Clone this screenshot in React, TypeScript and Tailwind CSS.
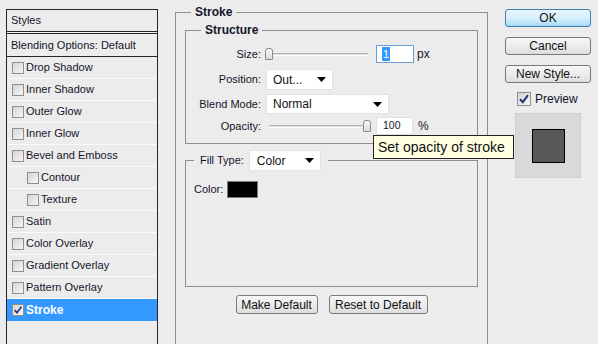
import React from "react";

const font = "font-['Liberation_Sans',Arial,sans-serif]";

function Check({ checked, size = 12 }: { checked?: boolean; size?: number }) {
  return (
    <span
      className="flex shrink-0 items-center justify-center border border-[#8f8f8f] bg-gradient-to-br from-[#d4d4d4] to-[#f7f7f7]"
      style={{ width: size, height: size }}
    >
      {checked && (
        <svg width={size - 2} height={size - 2} viewBox="0 0 12 12">
          <path d="M2 6.2 L4.8 9.2 L10 2.2" fill="none" stroke="#24337a" strokeWidth="2" />
        </svg>
      )}
    </span>
  );
}

function Arrow() {
  return (
    <svg width="9" height="5" viewBox="0 0 9 5">
      <path d="M0 0 H9 L4.5 5 Z" fill="#000" />
    </svg>
  );
}

function Select({ value, className }: { value: string; className: string }) {
  return (
    <div
      className={`flex items-center justify-between border border-[#e2e2e2] bg-white pr-[6px] pl-[6px] text-[12px] text-[#111] ${className}`}
    >
      <span>{value}</span>
      <Arrow />
    </div>
  );
}

function Slider({ thumb, className }: { thumb: "start" | "end"; className: string }) {
  return (
    <div className={`relative flex h-full items-center ${className}`}>
      <div className="h-[3px] w-full border-t border-[#b4b4b4] border-b border-b-white bg-[#dcdcdc]" />
      <div
        className={`absolute top-1/2 h-[12px] w-[8px] -translate-y-1/2 rounded-t-[3px] rounded-b-[1px] border border-[#8a8a8a] bg-gradient-to-b from-[#fafafa] to-[#dadada] ${
          thumb === "start" ? "left-0" : "right-0"
        }`}
      />
    </div>
  );
}

function Btn({ children, className }: { children: React.ReactNode; className: string }) {
  return (
    <div
      className={`flex items-center justify-center rounded-[3px] border border-[#7a7a7a] bg-gradient-to-b from-[#f7f7f7] via-[#ececec] to-[#dddddd] text-[12px] text-[#111] ${className}`}
    >
      {children}
    </div>
  );
}

const items: { label: string; indent?: boolean; checked?: boolean }[] = [
  { label: "Drop Shadow" },
  { label: "Inner Shadow" },
  { label: "Outer Glow" },
  { label: "Inner Glow" },
  { label: "Bevel and Emboss" },
  { label: "Contour", indent: true },
  { label: "Texture", indent: true },
  { label: "Satin" },
  { label: "Color Overlay" },
  { label: "Gradient Overlay" },
  { label: "Pattern Overlay" },
  { label: "Stroke", checked: true },
];

export default function App() {
  return (
    <div className={`${font} relative flex h-[344px] w-[598px] items-start overflow-hidden bg-[#ececec] text-[11px] text-[#15152a]`}>
      {/* styles list */}
      <div className="mt-[9px] ml-[6px] h-[400px] w-[152px] shrink-0 border border-[#262626]">
        <div className="flex h-[22px] items-center border-b border-[#262626] pl-[4px]">Styles</div>
        <div className="h-[1px] bg-[#f4f4f4]" />
        <div className="flex h-[24px] items-center border-y border-[#262626] pl-[4px]">
          Blending Options: Default
        </div>
        {items.map((it) => (
          <div
            key={it.label}
            className={`flex h-[22px] items-center gap-[2px] border-b ${
              it.checked ? "border-[#3399ff] bg-[#3399ff] text-[12px] font-bold text-white" : "border-[#fbfbfb]"
            } ${it.indent ? "pl-[20px]" : "pl-[5px]"}`}
          >
            <Check checked={it.checked} />
            <span>{it.label}</span>
          </div>
        ))}
      </div>

      {/* stroke panel */}
      <div className="mt-[5px] ml-[17px] w-[313px] shrink-0">
        <fieldset className="h-[400px] border border-[#8e8e8e]">
          <legend className="ml-[15px] px-[4px] text-[12px] leading-[14px] font-bold">Stroke</legend>
          <div className="px-[9px] pt-[4px]">
            <fieldset className="border border-[#8e8e8e]">
              <legend className="ml-[15px] px-[4px] text-[12px] leading-[14px] font-bold">Structure</legend>
              <div className="pt-[7px] pb-[8px]">
                <div className="flex h-[20px] items-center">
                  <span className="w-[75px] text-right">Size:</span>
                  <Slider thumb="start" className="ml-[4px] w-[103px]" />
                  <div className="ml-[8px] flex h-[18px] w-[38px] items-center border border-[#6a9fd6] bg-white pl-[5px]">
                    <span className="bg-[#3399ff] px-[1px] text-[11px] leading-[14px] text-white">1</span>
                  </div>
                  <span className="ml-[3px] text-[12px]">px</span>
                </div>
                <div className="mt-[5px] flex h-[21px] items-center">
                  <span className="w-[75px] text-right">Position:</span>
                  <Select value="Out..." className="ml-[5px] h-[21px] w-[67px]" />
                </div>
                <div className="mt-[4px] flex h-[20px] items-center">
                  <span className="w-[75px] text-right">Blend Mode:</span>
                  <Select value="Normal" className="ml-[5px] h-[20px] w-[123px]" />
                </div>
                <div className="mt-[3px] flex h-[18px] items-center">
                  <span className="w-[75px] text-right">Opacity:</span>
                  <Slider thumb="end" className="ml-[8px] w-[102px]" />
                  <div className="ml-[5px] flex h-[18px] w-[37px] items-center border border-[#e0e0e0] bg-white pl-[6px] text-[10.5px]">
                    100
                  </div>
                  <span className="ml-[5px] text-[12px]">%</span>
                </div>
              </div>
            </fieldset>

            <fieldset className="mt-[6px] border border-[#8e8e8e]">
              <legend className="ml-[8px] pr-[7px] pl-[6px]">
                <div className="flex items-center gap-[5px]">
                  <span>Fill Type:</span>
                  <Select value="Color" className="h-[21px] w-[72px] pl-[7px]" />
                </div>
              </legend>
              <div className="h-[115px] pt-[10px] pl-[8px]">
                <div className="flex items-center gap-[4px]">
                  <span>Color:</span>
                  <div className="h-[17px] w-[31px] border border-[#7a7a7a] bg-black" />
                </div>
              </div>
            </fieldset>

            <div className="mt-[8px] flex justify-center gap-[11px]">
              <Btn className="h-[19px] w-[82px]">Make Default</Btn>
              <Btn className="h-[19px] w-[99px]">Reset to Default</Btn>
            </div>
          </div>
        </fieldset>
      </div>

      {/* right buttons */}
      <div className="mt-[9px] ml-[17px] flex w-[86px] shrink-0 flex-col">
        <div className="flex h-[18px] items-center justify-center rounded-[3px] border border-[#3c7fb1] bg-gradient-to-b from-[#eaf6fd] via-[#d9f0fc] to-[#a7d9f5] text-[12px] text-[#111]">
          OK
        </div>
        <Btn className="mt-[10px] h-[18px] w-full">Cancel</Btn>
        <Btn className="mt-[10px] h-[18px] w-full">New Style...</Btn>
        <div className="mt-[8px] ml-[12px] flex h-[16px] items-center gap-[4px] text-[12px]">
          <Check checked size={14} />
          <span>Preview</span>
        </div>
        <div className="mt-[6px] ml-[10px] flex h-[65px] w-[66px] items-center justify-center border border-[#cfcfcf] bg-[#d9d9d9]">
          <div className="h-[34px] w-[33px] border border-black bg-[#585858]" />
        </div>
      </div>

      {/* tooltip */}
      <div className="absolute top-[135px] left-[373px] flex h-[24px] w-[141px] items-center border border-[#222] bg-[#ffffe1] pl-[4px] text-[14px] text-[#111]">
        Set opacity of stroke
      </div>
    </div>
  );
}
